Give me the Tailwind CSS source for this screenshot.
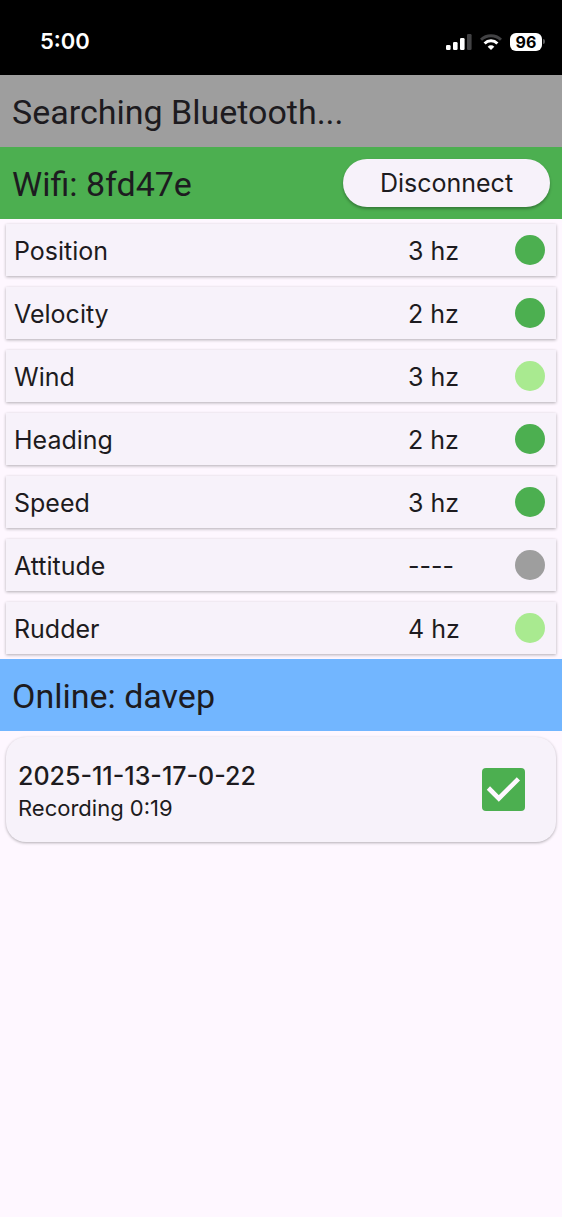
<!DOCTYPE html>
<html lang="en">
<head>
<meta charset="utf-8">
<meta name="viewport" content="width=device-width, initial-scale=1">
<title>Boat data recorder</title>
<script src="https://cdn.jsdelivr.net/npm/@tailwindcss/browser@4"></script>
</head>
<body class="min-h-screen bg-[#fef7ff] font-[Inter,Roboto,sans-serif] text-[25px] text-[#1d1b20]">
  <header class="flex h-[75px] items-center justify-between bg-black pt-2 pr-[17px] pl-10 text-white">
    <time class="text-[22px] font-semibold">5:00</time>
    <div class="flex items-center gap-2">
      <svg class="h-4 w-[26px]" viewBox="0 0 26 16" fill="currentColor" role="img" aria-label="Signal strength">
        <rect x="0" y="11" width="4.6" height="5" rx="1.3"/>
        <rect x="7" y="8" width="4.6" height="8" rx="1.3"/>
        <rect x="14" y="4" width="4.6" height="12" rx="1.3"/>
        <rect x="21" y="0" width="4.6" height="16" rx="1.3" fill="#424244"/>
      </svg>
      <svg class="h-4 w-[22px]" viewBox="0 0 22 16" fill="none" stroke-width="3" role="img" aria-label="Wi-Fi">
        <path d="M1 5.8a14.2 14.2 0 0 1 20 0" stroke="#424244"/>
        <path d="M4.6 9.5a9.1 9.1 0 0 1 12.8 0" stroke="currentColor"/>
        <path d="M11 16l-3.3-3.3a4.7 4.7 0 0 1 6.6 0z" fill="currentColor"/>
      </svg>
      <div class="flex items-center gap-px">
        <span class="flex h-[18px] w-8 items-center justify-center rounded-md bg-white text-base font-bold text-black">96</span>
        <span class="h-[5px] w-0.5 rounded-r-full bg-[#58585a]"></span>
      </div>
    </div>
  </header>

  <main>
    <section class="flex h-[72px] items-center bg-[#9e9e9e] px-3">
      <h2 class="pt-0.5 font-[Roboto,sans-serif] text-[34px]">Searching Bluetooth...</h2>
    </section>

    <section class="flex h-[72px] items-center justify-between bg-[#4caf50] px-3">
      <h2 class="pt-0.5 font-[Roboto,sans-serif] text-[34px]">Wifi: 8fd47e</h2>
      <button type="button" class="h-12 w-[207px] rounded-full bg-[#f7f2fa] pt-0.5 shadow-[0_2px_3px_rgba(0,0,0,0.3)]">Disconnect</button>
    </section>

    <ul class="flex flex-col gap-[11px] px-1.5 py-[5px]">
      <li class="flex h-[52px] items-center bg-[#f7f2fa] pr-[11px] pl-2 shadow-[0_1px_3px_rgba(0,0,0,0.3)]"><span class="flex-1 pt-1">Position</span><span class="w-[107px] pt-1">3 hz</span><span class="size-[30px] rounded-full bg-[#4caf50]"></span></li>
      <li class="flex h-[52px] items-center bg-[#f7f2fa] pr-[11px] pl-2 shadow-[0_1px_3px_rgba(0,0,0,0.3)]"><span class="flex-1 pt-1">Velocity</span><span class="w-[107px] pt-1">2 hz</span><span class="size-[30px] rounded-full bg-[#4caf50]"></span></li>
      <li class="flex h-[52px] items-center bg-[#f7f2fa] pr-[11px] pl-2 shadow-[0_1px_3px_rgba(0,0,0,0.3)]"><span class="flex-1 pt-1">Wind</span><span class="w-[107px] pt-1">3 hz</span><span class="size-[30px] rounded-full bg-[#a9ea90]"></span></li>
      <li class="flex h-[52px] items-center bg-[#f7f2fa] pr-[11px] pl-2 shadow-[0_1px_3px_rgba(0,0,0,0.3)]"><span class="flex-1 pt-1">Heading</span><span class="w-[107px] pt-1">2 hz</span><span class="size-[30px] rounded-full bg-[#4caf50]"></span></li>
      <li class="flex h-[52px] items-center bg-[#f7f2fa] pr-[11px] pl-2 shadow-[0_1px_3px_rgba(0,0,0,0.3)]"><span class="flex-1 pt-1">Speed</span><span class="w-[107px] pt-1">3 hz</span><span class="size-[30px] rounded-full bg-[#4caf50]"></span></li>
      <li class="flex h-[52px] items-center bg-[#f7f2fa] pr-[11px] pl-2 shadow-[0_1px_3px_rgba(0,0,0,0.3)]"><span class="flex-1 pt-1">Attitude</span><span class="w-[107px] pt-1">----</span><span class="size-[30px] rounded-full bg-[#9e9e9e]"></span></li>
      <li class="flex h-[52px] items-center bg-[#f7f2fa] pr-[11px] pl-2 shadow-[0_1px_3px_rgba(0,0,0,0.3)]"><span class="flex-1 pt-1">Rudder</span><span class="w-[107px] pt-1">4 hz</span><span class="size-[30px] rounded-full bg-[#a9ea90]"></span></li>
    </ul>

    <section class="flex h-[72px] items-center bg-[#72b6ff] px-3">
      <h2 class="pt-0.5 font-[Roboto,sans-serif] text-[34px]">Online: davep</h2>
    </section>

    <div class="px-1.5 pt-1.5">
      <div class="flex h-[105px] items-center justify-between rounded-[20px] bg-[#f7f2fa] pr-[31px] pl-3 shadow-[0_1px_3px_rgba(0,0,0,0.3)]">
        <label for="recording" class="flex flex-col pt-1">
          <span class="text-[25px] leading-8 font-medium">2025-11-13-17-0-22</span>
          <span class="text-[22px] leading-8">Recording 0:19</span>
        </label>
        <span class="relative flex">
          <input id="recording" type="checkbox" checked class="size-[43px] appearance-none rounded bg-[#4caf50]">
          <svg class="pointer-events-none absolute inset-0 size-full" viewBox="0 0 43 43" fill="none" stroke="#fef7ff" stroke-width="4.6" aria-hidden="true"><path d="M6.4 20L16.8 30.4L36.4 10.8"/></svg>
        </span>
      </div>
    </div>
  </main>
</body>
</html>
